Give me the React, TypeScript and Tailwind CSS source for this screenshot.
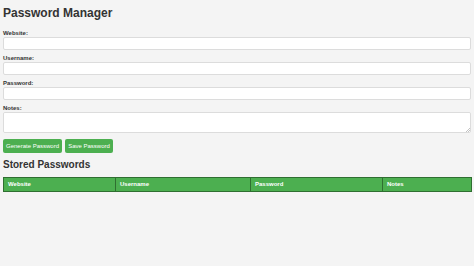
import React from "react";

export default function App() {
  const font = { fontFamily: '"Liberation Sans", Arial, sans-serif' };
  const fields = ["Website:", "Username:", "Password:"];
  return (
    <div
      className="w-[474px] h-[266px] bg-[#f4f4f4] text-[#333] px-[3px] pt-[6px] overflow-hidden"
      style={font}
    >
      <h1 className="text-[12px] leading-[14px] font-bold m-0">Password Manager</h1>
      <div className="mt-[9px] flex flex-col">
        {fields.map((f) => (
          <div key={f} className="flex flex-col mb-[4px]">
            <label className="text-[6px] leading-[8px] font-bold">{f}</label>
            <input
              type="text"
              className="w-[468px] h-[13px] bg-white border border-[#dcdcdc] rounded-[2px] outline-none"
            />
          </div>
        ))}
        <div className="flex flex-col">
          <label className="text-[6px] leading-[8px] font-bold">Notes:</label>
          <div className="relative w-[468px] h-[21px]">
            <textarea className="w-[468px] h-[21px] bg-white border border-[#dcdcdc] rounded-[2px] outline-none resize-none block" />
            <svg
              className="absolute right-[1px] bottom-[1px]"
              width="4"
              height="4"
              viewBox="0 0 4 4"
            >
              <path d="M4 0 L0 4 M4 2 L2 4" stroke="#9a9a9a" strokeWidth="0.6" />
            </svg>
          </div>
        </div>
      </div>
      <div className="flex gap-[3px] mt-[6px]">
        <button className="h-[14px] w-[59px] bg-[#4caf50] text-white text-[6px] rounded-[2px] flex items-center justify-center">
          Generate Password
        </button>
        <button className="h-[14px] w-[48px] bg-[#4caf50] text-white text-[6px] rounded-[2px] flex items-center justify-center">
          Save Password
        </button>
      </div>
      <h2 className="text-[10px] leading-[12px] font-bold mt-[6px]">Stored Passwords</h2>
      <table className="mt-[6px] w-[468px] border-collapse table-fixed">
        <thead>
          <tr className="bg-[#4caf50] text-white h-[14px]">
            <th className="w-[112px] border border-[#2f6f31] text-left text-[6px] font-bold pl-[4px] py-0">Website</th>
            <th className="w-[135px] border border-[#2f6f31] text-left text-[6px] font-bold pl-[4px] py-0">Username</th>
            <th className="w-[132px] border border-[#2f6f31] text-left text-[6px] font-bold pl-[4px] py-0">Password</th>
            <th className="w-[89px] border border-[#2f6f31] text-left text-[6px] font-bold pl-[4px] py-0">Notes</th>
          </tr>
        </thead>
        <tbody></tbody>
      </table>
    </div>
  );
}
